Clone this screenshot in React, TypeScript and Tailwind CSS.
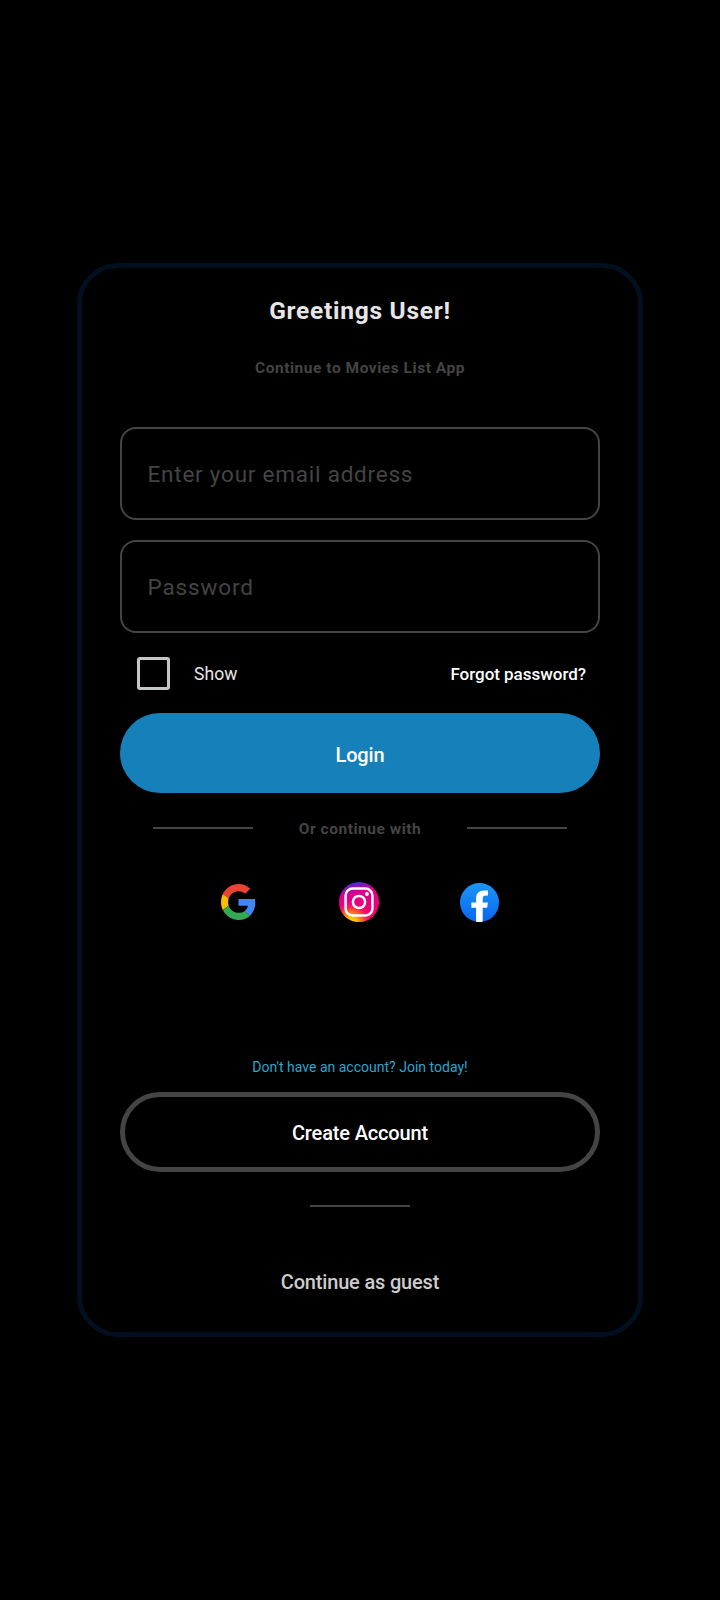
import type { ReactNode } from "react";

function Field({ label, className }: { label: string; className: string }) {
  return (
    <input
      aria-label={label}
      placeholder={label}
      className={`block h-[93px] w-full rounded-[16px] border-2 border-[#444444] bg-black px-[25.5px] text-[22.5px] text-white outline-none placeholder:text-[#444444] ${className}`}
    />
  );
}

function Rule() {
  return <div className="h-[2px] w-[100px] bg-[#444444]" />;
}

function GoogleIcon() {
  return (
    <svg viewBox="0 0 48 48" preserveAspectRatio="none" className="h-[36px] w-[35px]" aria-hidden="true">
      <path fill="#EA4335" d="M24 9.5c3.54 0 6.71 1.22 9.21 3.6l6.85-6.85C35.9 2.38 30.47 0 24 0 14.62 0 6.51 5.38 2.56 13.22l7.98 6.19C12.43 13.72 17.74 9.5 24 9.5z" />
      <path fill="#4285F4" d="M46.98 24.55c0-1.57-.15-3.09-.38-4.55H24v9.02h12.94c-.58 2.96-2.26 5.48-4.78 7.18l7.73 6c4.51-4.18 7.09-10.36 7.09-17.65z" />
      <path fill="#FBBC05" d="M10.53 28.59c-.48-1.45-.76-2.99-.76-4.59s.27-3.14.76-4.59l-7.98-6.19C.92 16.46 0 20.12 0 24c0 3.88.92 7.54 2.56 10.78l7.97-6.19z" />
      <path fill="#34A853" d="M24 48c6.48 0 11.93-2.13 15.89-5.81l-7.73-6c-2.15 1.45-4.92 2.3-8.16 2.3-6.26 0-11.57-4.22-13.47-9.91l-7.98 6.19C6.51 42.62 14.62 48 24 48z" />
    </svg>
  );
}

function InstagramIcon() {
  return (
    <svg viewBox="0 0 40 40" className="size-[40px]" aria-hidden="true">
      <defs>
        <linearGradient id="ig-base" x1="0.3" y1="0" x2="0.55" y2="1">
          <stop offset="0" stopColor="#3a35e8" />
          <stop offset="0.12" stopColor="#7a18c0" />
          <stop offset="0.28" stopColor="#d8008c" />
          <stop offset="1" stopColor="#ff0069" />
        </linearGradient>
        <radialGradient id="ig-warm" cx="0.3" cy="1.02" r="0.55">
          <stop offset="0" stopColor="#ffe000" />
          <stop offset="0.25" stopColor="#ffc000" />
          <stop offset="0.6" stopColor="#ff4a30" />
          <stop offset="1" stopColor="#ff0069" stopOpacity="0" />
        </radialGradient>
      </defs>
      <circle cx="20" cy="20" r="20" fill="url(#ig-base)" />
      <circle cx="20" cy="20" r="20" fill="url(#ig-warm)" />
      <rect x="6.6" y="6.6" width="26.8" height="26.8" rx="7" fill="none" stroke="#fff" strokeWidth="2.5" />
      <circle cx="20" cy="20" r="6.1" fill="none" stroke="#fff" strokeWidth="2.5" />
      <circle cx="28" cy="12" r="1.9" fill="#fff" />
    </svg>
  );
}

function FacebookIcon() {
  return (
    <svg viewBox="0 0 39 39" className="size-[39px]" aria-hidden="true">
      <defs>
        <linearGradient id="fb" x1="0" y1="0" x2="0" y2="1">
          <stop offset="0" stopColor="#1c96f8" />
          <stop offset="1" stopColor="#0866f0" />
        </linearGradient>
      </defs>
      <circle cx="19.5" cy="19.5" r="19.5" fill="url(#fb)" />
      <path fill="#fff" d="M16.1 38.7V24.8h-4.7v-5.4h4.7v-3.6c0-5.5 2.8-8.2 8.4-8.2h3.5v5h-1.9c-2.5 0-3.4 1.1-3.4 3.6v3.2h5.2l-.8 5.4h-4.4v13.9a20 20 0 0 1-6.6 0z" />
    </svg>
  );
}

function IconButton({ label, className, children }: { label: string; className: string; children: ReactNode }) {
  return (
    <button aria-label={label} className={`flex h-[40px] items-center justify-center ${className}`}>
      {children}
    </button>
  );
}

export default function App() {
  return (
    <main className="flex h-[1600px] w-[720px] justify-center bg-black pt-[263px] font-['Roboto',sans-serif]">
      <section className="flex h-[1074px] w-[566px] flex-col items-center rounded-[41px] border-[5px] border-[#020f1f] px-[38px]">
        <h1 className="mt-[27px] h-[32px] text-[24.5px] leading-[32px] font-bold tracking-[0.73px] text-[#e6e6e6]">Greetings User!</h1>
        <p className="mt-[31px] h-[20px] text-[15.5px] leading-[20px] font-bold tracking-[0.53px] text-[#444444]">Continue to Movies List App</p>

        <Field label="Enter your email address" className="mt-[49px] tracking-[0.77px]" />
        <Field label="Password" className="mt-[20px] tracking-[0.85px]" />

        <div className="mt-[24px] flex h-[33px] w-full items-center pr-[14px] pl-[17px]">
          <span role="checkbox" aria-checked="false" className="size-[33px] rounded-[3px] border-[3px] border-[#c0c8c8]" />
          <span className="ml-[24px] pt-[1px] text-[17.5px] leading-[20px] tracking-[0.1px] text-[#e6e6e6]">Show</span>
          <a className="ml-auto text-[17px] leading-[20px] font-medium tracking-[-0.03px] text-white">Forgot password?</a>
        </div>

        <button className="mt-[23px] h-[80px] w-full rounded-full bg-[#1680ba] pt-[3px] text-[20px] leading-[24px] font-medium tracking-[-0.15px] text-white">Login</button>

        <div className="mt-[23px] flex h-[24px] w-full items-center justify-between px-[33px]">
          <Rule />
          <span className="pt-[1px] text-[15.5px] leading-[20px] font-bold tracking-[0.53px] text-[#444444]">Or continue with</span>
          <Rule />
        </div>

        <div className="mt-[42px] flex h-[40px] w-full pl-[100.5px]">
          <IconButton label="Google" className="w-[36px]"><GoogleIcon /></IconButton>
          <IconButton label="Instagram" className="ml-[82px] w-[40px]"><InstagramIcon /></IconButton>
          <IconButton label="Facebook" className="ml-[81px] w-[40px]"><FacebookIcon /></IconButton>
        </div>

        <p className="mt-[135px] h-[20px] text-[14px] leading-[20px] tracking-[0.01px] text-[#29a6cf]">Don't have an account? Join today!</p>
        <button className="mt-[15px] h-[80px] w-full shrink-0 rounded-full border-[5px] border-[#444444] pt-[2px] text-[20px] leading-[24px] font-medium tracking-[-0.15px] text-white">Create Account</button>
        <div className="mt-[33px]"><Rule /></div>
        <button className="mt-[63px] h-[24px] text-[20px] leading-[24px] font-medium tracking-[-0.18px] text-[#cccccc]">Continue as guest</button>
      </section>
    </main>
  );
}
